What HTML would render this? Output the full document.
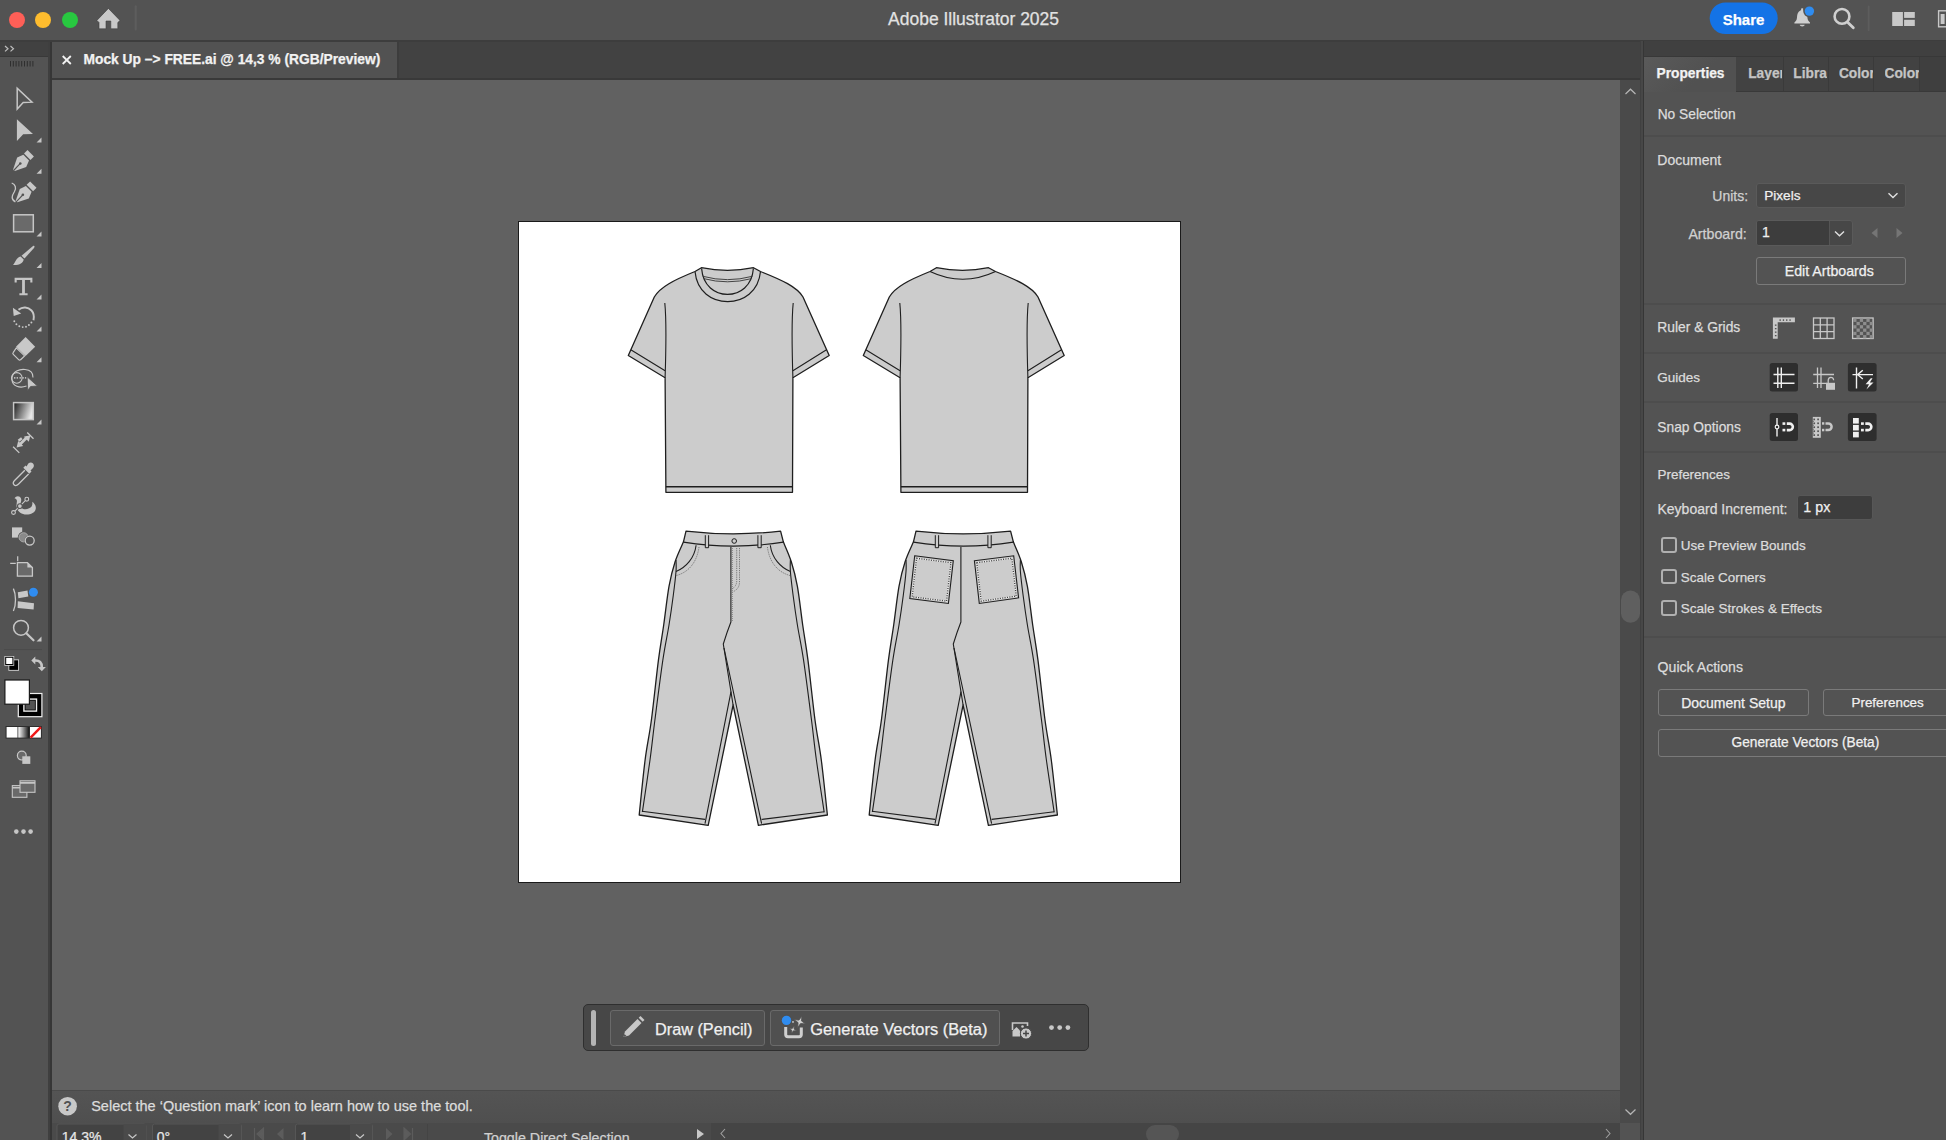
<!DOCTYPE html>
<html><head><meta charset="utf-8">
<style>
*{box-sizing:border-box;margin:0;padding:0}
html,body{width:1946px;height:1140px;overflow:hidden;background:#535353;font-family:"Liberation Sans",sans-serif;position:relative}
.a{position:absolute}
.t{position:absolute;white-space:nowrap;line-height:1;-webkit-text-stroke:0.25px currentColor}
.dv{position:absolute;left:1644px;width:302px;height:2px;background:#4d4d4d}
.btn{position:absolute;border:1.2px solid #7a7a7a;border-radius:3px;background:#535353}
</style></head><body>
<!-- title bar -->
<div class="a" style="left:0;top:0;width:1946px;height:40px;background:#535353"></div>
<div class="a" style="left:0;top:40px;width:1946px;height:2px;background:#3d3d3d"></div>
<div class="a" style="left:9px;top:11.5px;width:16px;height:16px;border-radius:50%;background:#fe5f57"></div>
<div class="a" style="left:35px;top:11.5px;width:16px;height:16px;border-radius:50%;background:#febc2e"></div>
<div class="a" style="left:61.5px;top:11.5px;width:16px;height:16px;border-radius:50%;background:#28c840"></div>
<svg class="a" style="left:0;top:0" width="1946" height="40" viewBox="0 0 1946 40">
<path d="M108.4,8.4 L120,20.4 L117.8,22.5 V28.8 H110.8 V21 H106 V28.8 H99 V22.5 L96.9,20.4 Z" fill="#c8c8c8" stroke="#3e3e3e" stroke-width="0.6"/>
<rect x="134.7" y="5.3" width="2" height="25.3" rx="1" fill="#5d5d5d"/>
<rect x="1709.7" y="2.5" width="68" height="31.5" rx="15.75" fill="#1473e6"/>
<!-- bell -->
<path d="M1802.2,10 C1798,10.5 1797.2,14 1797,17.5 C1796.8,20 1795.8,21.3 1794.4,22.5 V23.6 H1810 V22.5 C1808.6,21.3 1807.6,20 1807.4,17.5 C1807.2,14 1806.4,10.5 1802.2,10 Z" fill="#cfcfcf"/>
<rect x="1801.1" y="8.2" width="2.2" height="3" rx="0.8" fill="#cfcfcf"/>
<path d="M1799.7,24.8 H1804.7 C1804.5,27 1800,27 1799.7,24.8 Z" fill="#c8c8c8"/>
<circle cx="1809.4" cy="11.1" r="6.2" fill="#535353"/>
<circle cx="1809.4" cy="11.1" r="4.7" fill="#2f8cf0"/>
<!-- search -->
<circle cx="1842" cy="16.4" r="7.4" fill="none" stroke="#cfcfcf" stroke-width="2.6"/>
<path d="M1847.6,22.2 L1853.3,27.8" stroke="#cfcfcf" stroke-width="2.8" stroke-linecap="round"/>
<rect x="1867.8" y="5.5" width="1.8" height="25.6" rx="0.9" fill="#5d5d5d"/>
<!-- layout -->
<rect x="1892.2" y="12" width="10.7" height="14" fill="#c8c8c8"/>
<rect x="1904.1" y="12" width="10.7" height="5.9" fill="#c8c8c8"/>
<rect x="1904.1" y="19.8" width="10.7" height="6.2" fill="#c8c8c8"/>
<rect x="1938.6" y="10.8" width="9" height="16" fill="none" stroke="#c8c8c8" stroke-width="1.4"/>
<rect x="1940.6" y="14" width="4" height="10" fill="#c8c8c8"/>
</svg>

<!-- left toolbar -->
<div class="a" style="left:0;top:42px;width:48px;height:1098px;background:#535353"></div>
<div class="a" style="left:0;top:42px;width:48px;height:14px;background:#414141"></div>
<div class="a" style="left:0;top:56px;width:48px;height:1px;background:#393939"></div>
<div class="a" style="left:48px;top:42px;width:4px;height:1098px;background:#3f3f3f"></div>
<div class="a" style="left:50px;top:42px;width:1.5px;height:1098px;background:#363636"></div>
<!-- toolbar icons -->
<svg class="a" style="left:0;top:0" width="52" height="1140" viewBox="0 0 52 1140">
<g fill="none" stroke="#bdbdbd" stroke-width="1.2"><path d="M5,46 L8,48.7 L5,51.4 M10.5,46 L13.5,48.7 L10.5,51.4"/></g>
<g stroke="#2e2e2e" stroke-width="1"><path d="M10.5,61 V66.5 M13.3,61 V66.5 M16.1,61 V66.5 M18.9,61 V66.5 M21.7,61 V66.5 M24.5,61 V66.5 M27.3,61 V66.5 M30.1,61 V66.5 M32.9,61 V66.5"/></g>
<g fill="#c6c6c6">
<path d="M41.5,137.5 L41.5,142.5 L36.5,142.5Z M41.5,168.8 L41.5,173.8 L36.5,173.8Z M41.5,231.5 L41.5,236.5 L36.5,236.5Z M41.5,263 L41.5,268 L36.5,268Z M41.5,294.5 L41.5,299.5 L36.5,299.5Z M41.5,326.5 L41.5,331.5 L36.5,331.5Z M41.5,357.2 L41.5,362.2 L36.5,362.2Z M41.5,419.5 L41.5,424.5 L36.5,424.5Z M41.5,636.5 L41.5,641.5 L36.5,641.5Z"/>
</g>
<!-- selection -->
<path d="M17.2,88.2 L17.2,109 L23.2,102.6 L32,102.2 Z" fill="none" stroke="#c6c6c6" stroke-width="1.5" stroke-linejoin="miter"/>
<!-- direct selection -->
<path d="M16.9,119.3 L16.9,141.1 L23.2,134.3 L33,134.1 Z" fill="#c6c6c6"/>
<!-- pen -->
<path d="M13,169.7 L17.2,157.6 L23.3,154.7 L29,160.4 L26.2,167.1 L14.8,171 Z" fill="#c8c8c8"/>
<path d="M24,153.4 L27.5,150.1 L33.9,156.5 L30.5,160 Z" fill="#c8c8c8"/>
<path d="M13.6,170.5 L20.1,163.7" stroke="#535353" stroke-width="1.1"/>
<circle cx="20.3" cy="163.5" r="1.3" fill="#535353"/>
<!-- curvature pen -->
<path d="M15.6,201 L19.8,188.9 L25.9,186 L31.6,191.7 L28.8,198.4 L17.4,202.3 Z" fill="#c8c8c8"/>
<path d="M26.6,184.7 L30.1,181.4 L36.5,187.8 L33.1,191.3 Z" fill="#c8c8c8"/>
<path d="M16.2,201.8 L22.7,195" stroke="#535353" stroke-width="1.1"/>
<circle cx="22.9" cy="194.8" r="1.3" fill="#535353"/>
<path d="M11.7,183 C15.5,184.5 16.5,188 14.5,191.5 C12,195.5 10.5,199.5 15.4,201.8" fill="none" stroke="#c8c8c8" stroke-width="1.3"/>
<!-- rectangle -->
<rect x="13.6" y="214.8" width="19.7" height="17" fill="#6a6a6a" stroke="#c6c6c6" stroke-width="1.5"/>
<!-- paintbrush -->
<g fill="#c6c6c6">
<path d="M33,246 C34.5,245 35,246.5 34,248 L24.5,258.5 L21.5,255.8 Z"/>
<path d="M20.6,256.6 L23.7,259.4 C23,262.8 20,265.2 13,265 C15.5,263 16,257.5 20.6,256.6 Z"/>
</g>
<!-- type -->
<path d="M14.6,277.8 H32.4 V282.6 H30.3 V280 H24.9 V293.2 H27.6 V295.2 H19.4 V293.2 H22.1 V280 H16.7 V282.6 H14.6 Z" fill="#c6c6c6"/>
<!-- rotate -->
<path d="M18.5,309.8 C22.5,306.5 28,306.8 31.5,310.5 C33.8,313 34.2,317 33.5,320.3" fill="none" stroke="#c8c8c8" stroke-width="1.9"/>
<path d="M12.9,307.8 L13.7,316 L21.2,313.5 Z" fill="#c8c8c8"/>
<g fill="#c8c8c8"><circle cx="14.3" cy="321.3" r="0.95"/><circle cx="16.4" cy="324.2" r="0.95"/><circle cx="19.3" cy="326.3" r="0.95"/><circle cx="22.7" cy="327.1" r="0.95"/><circle cx="26" cy="326.8" r="0.95"/><circle cx="28.9" cy="325" r="0.95"/><circle cx="31.4" cy="322.5" r="0.95"/></g>
<!-- eraser -->
<path d="M25.6,337.1 L35.2,346.7 L25.6,356.1 L16,346.7 Z" fill="#c8c8c8"/>
<path d="M16.3,347.9 L24.6,355.9 L20.6,359.7 C20,360.3 19.2,360.3 18.6,359.7 L13.3,354.4 C12.7,353.8 12.7,353 13.3,352.4 Z" fill="none" stroke="#c8c8c8" stroke-width="1.2"/>
<!-- shape builder -->
<g fill="none" stroke="#c8c8c8" stroke-width="1.1">
<circle cx="16.8" cy="377.9" r="5.3"/>
<path d="M26.5,386 C20,388.5 12,386.5 12,379 C12,371 20,369 25,369.5 C30,370 33.2,373 33,377.5"/>
</g>
<g fill="#c8c8c8"><circle cx="14.75" cy="377.9" r="0.8"/><circle cx="17.3" cy="377.9" r="0.8"/><circle cx="20.2" cy="377.9" r="0.8"/><circle cx="23.1" cy="377.9" r="0.8"/><circle cx="25.6" cy="377.9" r="0.8"/></g>
<path d="M27.2,376.8 L27.7,390.6 L30.6,386.5 L37.4,386 Z" fill="#c8c8c8" stroke="#535353" stroke-width="0.8"/>
<!-- gradient -->
<defs><linearGradient id="gr" x1="0" x2="1" y1="0" y2="0.3"><stop offset="0" stop-color="#1a1a1a"/><stop offset="1" stop-color="#e6e6e6"/></linearGradient></defs>
<rect x="13.6" y="402.6" width="19.7" height="17" fill="url(#gr)" stroke="#c6c6c6" stroke-width="1.5"/>
<!-- width tool -->
<g stroke="#c8c8c8" stroke-width="1.3" fill="none"><path d="M13.1,446.7 L19.3,452.9 M27.25,432.5 L33.5,438.7"/></g>
<path d="M19.8,444.5 L27.3,437" stroke="#c8c8c8" stroke-width="2.8"/>
<path d="M16.6,447.6 L18.2,441 L23.2,446 Z M30.4,435.2 L28.8,441.8 L23.8,436.8 Z" fill="#c8c8c8"/>
<path d="M18.5,440.8 L21.8,438.2" stroke="#c8c8c8" stroke-width="2.4"/>
<!-- eyedropper -->
<path d="M28.3,463.5 C30.3,461.6 33.4,462.3 33.8,465 C34.1,466.5 33.4,467.6 32.5,468.5 L30.5,470.5 L31.5,471.5 L29.3,473.7 L23.3,467.7 L25.5,465.5 L26.5,466.5 Z" fill="#c8c8c8"/>
<path d="M24.8,470.3 L14.8,480.3 C13,482.1 13,483.8 14,484.8 C15,485.8 16.8,485.8 18.6,484 L28.6,474" fill="none" stroke="#c8c8c8" stroke-width="1.3"/>
<!-- puppet warp -->
<path d="M14.5,498.3 C16,495.5 20,495.5 21,498.5 C22,501.5 19.5,503.5 21,507 C22.5,510 27,510 30.5,507.5 C32.5,506 32.5,503.5 32.3,501.8 C34,503 36.2,505.5 35.8,508.5 C35.3,512.5 31,514.5 26.5,514.5 C21,514.5 16.8,511 16.5,506 C16.3,502.5 18.5,499.5 14.5,498.3 Z" fill="#c8c8c8"/>
<path d="M13.5,512.5 L26.8,499.2" stroke="#535353" stroke-width="2.6"/>
<path d="M13.5,512.5 L26.8,499.2" stroke="#c8c8c8" stroke-width="1.1"/>
<circle cx="13.5" cy="512.5" r="1.9" fill="#535353" stroke="#c8c8c8" stroke-width="1.1"/>
<circle cx="26.8" cy="499.2" r="1.9" fill="#535353" stroke="#c8c8c8" stroke-width="1.1"/>
<circle cx="19.9" cy="506.1" r="2.4" fill="#c8c8c8" stroke="#535353" stroke-width="1.1"/>
<!-- shaper / blend -->
<rect x="12" y="527.4" width="10.2" height="10.2" fill="#c8c8c8"/>
<circle cx="23.6" cy="537.3" r="5.2" fill="#8a8a8a" stroke="#535353" stroke-width="1.3"/>
<circle cx="23.6" cy="537.3" r="4.6" fill="none" stroke="#b8b8b8" stroke-width="0.8"/>
<circle cx="29.7" cy="540.6" r="5.3" fill="#535353"/>
<circle cx="29.7" cy="540.6" r="4.5" fill="#535353" stroke="#c8c8c8" stroke-width="1.3"/>
<!-- artboard -->
<path d="M17.4,562.6 H27.4 L32.4,567.6 V576.2 H17.4 Z" fill="#6a6a6a" stroke="#c8c8c8" stroke-width="1.3"/>
<path d="M27.4,562.6 L32.4,567.6 H27.4 Z" fill="#c8c8c8"/>
<path d="M17.7,556.2 V561.2 M10.2,563.3 H15.8" stroke="#c8c8c8" stroke-width="1.2"/>
<!-- generative / chart -->
<path d="M13.4,588.6 C16.2,594.5 16.2,605 13.4,611" fill="none" stroke="#c8c8c8" stroke-width="1.3"/>
<path d="M17.8,592.2 L27.5,590.4 L28.3,596.5 L18.4,598.2 Z M17.8,601.3 L34,603.2 L33.6,609.6 L17.6,608 Z" fill="#c8c8c8"/>
<circle cx="33.4" cy="592.3" r="5.2" fill="#535353"/>
<circle cx="33.4" cy="592.3" r="4.5" fill="#2f8cf0"/>
<!-- zoom -->
<circle cx="21" cy="627.8" r="7.4" fill="none" stroke="#c6c6c6" stroke-width="1.5"/>
<path d="M26.3,633.2 L33.5,640.3" stroke="#c6c6c6" stroke-width="2.2" stroke-linecap="round"/>
<path d="M4,649.6 H42" stroke="#4a4a4a" stroke-width="1"/>
<!-- swap/default -->
<rect x="8.4" y="659.4" width="10.6" height="11.4" fill="#cfcfcf"/>
<rect x="9.3" y="660.3" width="8.8" height="9.6" fill="#000"/>
<rect x="4.4" y="656" width="9.8" height="9.8" fill="#cfcfcf"/>
<rect x="5.2" y="656.8" width="8.2" height="8.2" fill="#000"/>
<rect x="6.2" y="657.8" width="6.2" height="6.2" fill="#fff"/>
<path d="M34.5,660.6 C39.5,660.2 42,662.5 41.8,667.5" fill="none" stroke="#c6c6c6" stroke-width="2.6"/>
<path d="M31.3,660.4 L35.3,656.6 L35.3,664.4 Z M37.8,667 L45.9,667 L41.8,671.3 Z" fill="#c6c6c6"/>
<!-- stroke -->
<rect x="18.3" y="693.5" width="23.6" height="23.2" fill="#000" stroke="#eeeeee" stroke-width="1.2"/>
<rect x="23.9" y="699.1" width="12.6" height="12" fill="none" stroke="#eeeeee" stroke-width="1.4"/>
<rect x="25.5" y="700.6" width="9.4" height="9" fill="#535353"/>
<!-- fill -->
<rect x="4.9" y="680" width="24.5" height="24.2" fill="#fff" stroke="#1a1a1a" stroke-width="1.2"/>
<!-- color mode -->
<rect x="5.5" y="726" width="36.4" height="12.6" fill="#2e2e2e"/>
<rect x="6.6" y="727" width="10.9" height="10.6" fill="#fff"/>
<defs><linearGradient id="g2" x1="0" x2="1"><stop offset="0" stop-color="#fff"/><stop offset="1" stop-color="#111"/></linearGradient></defs>
<rect x="18.3" y="727" width="10.9" height="10.6" fill="url(#g2)"/>
<rect x="30" y="727" width="10.9" height="10.6" fill="#fff"/>
<path d="M30.6,737.6 L40.8,727.2" stroke="#f01818" stroke-width="2.4"/>
<!-- draw mode -->
<circle cx="21.8" cy="755.6" r="4.4" fill="#6a6a6a" stroke="#c6c6c6" stroke-width="1.2"/>
<rect x="22.3" y="756.3" width="8" height="7.6" fill="#c6c6c6"/>
<!-- screen mode -->
<g>
<rect x="12.3" y="785.6" width="14.6" height="11.7" fill="#6a6a6a" stroke="#c6c6c6" stroke-width="1.1"/>
<rect x="20" y="780.8" width="15" height="11.5" fill="#6a6a6a" stroke="#c6c6c6" stroke-width="1.1"/>
<path d="M20,782.9 H35 M12.3,787.8 H20" stroke="#c6c6c6" stroke-width="1.6"/>
</g>
<!-- more -->
<g fill="#c6c6c6"><circle cx="16.3" cy="831.6" r="2.3"/><circle cx="23.5" cy="831.6" r="2.3"/><circle cx="30.6" cy="831.6" r="2.3"/></g>
</svg>

<!-- tab bar -->
<div class="a" style="left:52px;top:42px;width:1588px;height:36px;background:#424242"></div>
<div class="a" style="left:52px;top:78px;width:1588px;height:2px;background:#393939"></div>
<div class="a" style="left:52px;top:42px;width:345px;height:36px;background:#525252"></div>
<div class="a" style="left:397px;top:42px;width:1.5px;height:36px;background:#3d3d3d"></div>
<svg class="a" style="left:60px;top:53px" width="14" height="14" viewBox="0 0 14 14"><path d="M2.7,3 L10.8,11 M10.8,3 L2.7,11" stroke="#f2f2f2" stroke-width="1.8"/></svg>

<!-- canvas -->
<div class="a" style="left:52px;top:80px;width:1568px;height:1010px;background:#616161"></div>
<div class="a" style="left:1620px;top:80px;width:20px;height:1043px;background:#4a4a4a"></div>
<svg class="a" style="left:1620px;top:80px" width="20" height="1043" viewBox="0 0 20 1043">
<path d="M5.5,14 L10.5,9.2 L15.5,14" fill="none" stroke="#b5b5b5" stroke-width="1.2"/>
<rect x="1" y="510.5" width="19" height="32.2" rx="9.5" fill="#5f5f5f"/>
<path d="M5.5,1029.5 L10.5,1034.3 L15.5,1029.5" fill="none" stroke="#b5b5b5" stroke-width="1.2"/>
</svg>

<!-- artboard -->
<div class="a" style="left:518px;top:221px;width:663px;height:662px;background:#fff;border:1px solid #1a1a1a"></div>
<svg class="a" style="left:0;top:0" width="1946" height="1140" viewBox="0 0 1946 1140"><path d="M701.4,267.7 Q727.5,273 753.5,267.7 L760.5,271.5 C782,280 797,287 803,297 L829.2,355.5 L792.9,377.7 L792.5,492.3 L665.9,492.3 L665.1,377.7 L628.3,355.5 L654.3,297 C660,287 674,280 695,271.5 Z" fill="#cccccc" stroke="#1e1e1e" stroke-width="1.3" stroke-linejoin="round"/><path d="M695,271.5 C697,292 712,301.6 727.7,301.6 C743,301.6 758.5,292 760.5,271.5" fill="none" stroke="#1e1e1e" stroke-width="1.2"/><path d="M701.6,268.5 C703,286 715,294.4 727.5,294.4 C740,294.4 752,286 753.4,268.5" fill="none" stroke="#1e1e1e" stroke-width="1.2"/><path d="M702.8,276.3 Q727.5,283 752.4,276.3" fill="none" stroke="#333" stroke-width="0.9"/><path d="M703.6,278.6 Q727.5,285 751.6,278.6" fill="none" stroke="#333" stroke-width="0.9"/><path d="M630.8,349.7 L665.1,370.7 M826.5,349.7 L792.9,370.7" fill="none" stroke="#1e1e1e" stroke-width="1.1"/><path d="M664.8,303 C666.5,320 666,350 665.1,377.7 M793.2,303 C791.5,320 792,350 792.9,377.7" fill="none" stroke="#1e1e1e" stroke-width="1.1"/><path d="M665.9,486.7 L792.5,486.7" fill="none" stroke="#1e1e1e" stroke-width="1.4"/><g transform="translate(235,0)"><path d="M701.4,267.7 Q727.5,273 753.5,267.7 L760.5,271.5 C782,280 797,287 803,297 L829.2,355.5 L792.9,377.7 L792.5,492.3 L665.9,492.3 L665.1,377.7 L628.3,355.5 L654.3,297 C660,287 674,280 695,271.5 Z" fill="#cccccc" stroke="#1e1e1e" stroke-width="1.3" stroke-linejoin="round"/><path d="M695,271.5 Q727.7,287 760.5,271.5" fill="none" stroke="#1e1e1e" stroke-width="1.2"/><path d="M630.8,349.7 L665.1,370.7 M826.5,349.7 L792.9,370.7" fill="none" stroke="#1e1e1e" stroke-width="1.1"/><path d="M664.8,303 C666.5,320 666,350 665.1,377.7 M793.2,303 C791.5,320 792,350 792.9,377.7" fill="none" stroke="#1e1e1e" stroke-width="1.1"/><path d="M665.9,486.7 L792.5,486.7" fill="none" stroke="#1e1e1e" stroke-width="1.4"/></g><path d="M686,531.1 Q733,536.5 780.6,531.1 L783.4,542.1 C784.72,545.38 788.97,554.42 791.30,561.80 C793.63,569.18 795.50,575.87 797.40,586.40 C799.30,596.93 800.93,612.67 802.70,625.00 C804.47,637.33 805.95,644.57 808.00,660.40 C810.05,676.23 812.78,703.40 815.00,720.00 C817.22,736.60 819.23,744.17 821.30,760.00 C823.37,775.83 826.38,805.83 827.40,815.00 L758.4,825.3 L733.1,705 L708.2,825.3 L639.2,815 C640.18,805.83 643.07,775.83 645.10,760.00 C647.13,744.17 649.18,736.60 651.40,720.00 C653.62,703.40 656.35,676.23 658.40,660.40 C660.45,644.57 661.93,637.33 663.70,625.00 C665.47,612.67 667.10,596.93 669.00,586.40 C670.90,575.87 672.70,569.18 675.10,561.80 C677.50,554.42 682.02,545.38 683.40,542.10 L686,531.1 Z" fill="#cccccc" stroke="#1e1e1e" stroke-width="1.3" stroke-linejoin="round"/><path d="M683.4,542.1 Q733.5,550 783.4,542.1" fill="none" stroke="#1e1e1e" stroke-width="1.2"/><path d="M705.3,535.2 L705.3,547.7 L708.6,547.7 L708.6,535.2 M757.9,535.2 L757.9,547.7 L761.2,547.7 L761.2,535.2" fill="#cccccc" stroke="#1e1e1e" stroke-width="1"/><path d="M676,560 C676.00,561.92 676.45,565.63 676.00,571.50 C675.55,577.37 674.47,586.28 673.30,595.20 C672.13,604.12 670.75,614.13 669.00,625.00 C667.25,635.87 665.15,644.57 662.80,660.40 C660.45,676.23 657.03,703.40 654.90,720.00 C652.77,736.60 652.08,744.70 650.00,760.00 C647.92,775.30 643.67,803.17 642.40,811.80 " fill="none" stroke="#1e1e1e" stroke-width="1.1"/><path d="M790.4,560 C790.40,561.92 789.95,565.63 790.40,571.50 C790.85,577.37 791.93,586.28 793.10,595.20 C794.27,604.12 795.65,614.13 797.40,625.00 C799.15,635.87 801.25,644.57 803.60,660.40 C805.95,676.23 809.37,703.40 811.50,720.00 C813.63,736.60 814.28,744.62 816.40,760.00 C818.52,775.38 822.90,803.58 824.20,812.30 " fill="none" stroke="#1e1e1e" stroke-width="1.1"/><path d="M641.9,811.3 L705,819.4 M761.6,819.4 L824.2,811.8" fill="none" stroke="#1e1e1e" stroke-width="1.1"/><path d="M705,823.7 L731,691.6 M724,648 L761.6,823.7" fill="none" stroke="#1e1e1e" stroke-width="1.1"/><path d="M730.9,547 L730.9,622 Q727,632 723.3,644 L733.1,705" fill="none" stroke="#1e1e1e" stroke-width="1.1"/><circle cx="734.2" cy="541" r="2.3" fill="#cccccc" stroke="#1e1e1e" stroke-width="1"/><path d="M696.1,545.2 C694.5,558 686,567.5 676,571.5 M770.3,545.2 C771.9,558 780.4,567.5 790.4,571.5" fill="none" stroke="#1e1e1e" stroke-width="1.1"/><path d="M699,547 C697,562 689,572 676.5,575.5 M767.4,547 C769.4,562 777.4,572 789.9,575.5" fill="none" stroke="#555" stroke-width="0.7" stroke-dasharray="1.2,1"/><path d="M736.7,548 L736.7,581 Q736.7,586 732,589 M739.5,548 L739.5,582 Q739.5,589 732.5,592" fill="none" stroke="#555" stroke-width="0.7" stroke-dasharray="1.2,1"/><path d="M732.5,548 L732.5,622" fill="none" stroke="#666" stroke-width="0.6" stroke-dasharray="1,1"/><g transform="translate(230,0)"><path d="M686,531.1 Q733,536.5 780.6,531.1 L783.4,542.1 C784.72,545.38 788.97,554.42 791.30,561.80 C793.63,569.18 795.50,575.87 797.40,586.40 C799.30,596.93 800.93,612.67 802.70,625.00 C804.47,637.33 805.95,644.57 808.00,660.40 C810.05,676.23 812.78,703.40 815.00,720.00 C817.22,736.60 819.23,744.17 821.30,760.00 C823.37,775.83 826.38,805.83 827.40,815.00 L758.4,825.3 L733.1,705 L708.2,825.3 L639.2,815 C640.18,805.83 643.07,775.83 645.10,760.00 C647.13,744.17 649.18,736.60 651.40,720.00 C653.62,703.40 656.35,676.23 658.40,660.40 C660.45,644.57 661.93,637.33 663.70,625.00 C665.47,612.67 667.10,596.93 669.00,586.40 C670.90,575.87 672.70,569.18 675.10,561.80 C677.50,554.42 682.02,545.38 683.40,542.10 L686,531.1 Z" fill="#cccccc" stroke="#1e1e1e" stroke-width="1.3" stroke-linejoin="round"/><path d="M683.4,542.1 Q733.5,550 783.4,542.1" fill="none" stroke="#1e1e1e" stroke-width="1.2"/><path d="M705.3,535.2 L705.3,547.7 L708.6,547.7 L708.6,535.2 M757.9,535.2 L757.9,547.7 L761.2,547.7 L761.2,535.2" fill="#cccccc" stroke="#1e1e1e" stroke-width="1"/><path d="M676,560 C676.00,561.92 676.45,565.63 676.00,571.50 C675.55,577.37 674.47,586.28 673.30,595.20 C672.13,604.12 670.75,614.13 669.00,625.00 C667.25,635.87 665.15,644.57 662.80,660.40 C660.45,676.23 657.03,703.40 654.90,720.00 C652.77,736.60 652.08,744.70 650.00,760.00 C647.92,775.30 643.67,803.17 642.40,811.80 " fill="none" stroke="#1e1e1e" stroke-width="1.1"/><path d="M790.4,560 C790.40,561.92 789.95,565.63 790.40,571.50 C790.85,577.37 791.93,586.28 793.10,595.20 C794.27,604.12 795.65,614.13 797.40,625.00 C799.15,635.87 801.25,644.57 803.60,660.40 C805.95,676.23 809.37,703.40 811.50,720.00 C813.63,736.60 814.28,744.62 816.40,760.00 C818.52,775.38 822.90,803.58 824.20,812.30 " fill="none" stroke="#1e1e1e" stroke-width="1.1"/><path d="M641.9,811.3 L705,819.4 M761.6,819.4 L824.2,811.8" fill="none" stroke="#1e1e1e" stroke-width="1.1"/><path d="M705,823.7 L731,691.6 M724,648 L761.6,823.7" fill="none" stroke="#1e1e1e" stroke-width="1.1"/><path d="M730.9,547 L730.9,622 Q727,632 723.3,644 L733.1,705" fill="none" stroke="#1e1e1e" stroke-width="1.1"/><path d="M684.7,555.8 L723.3,560.7 L718.4,603.5 L679.8,598.6 Z M744.4,560.7 L783.7,555.8 L788.6,597.9 L749.3,603.5 Z" fill="#cccccc" stroke="#1e1e1e" stroke-width="1.1"/><path d="M686.6,558.3 L720.9,562.7 L716.5,601.1 L682.2,596.8 Z M746.8,562.7 L781.8,558.3 L786.2,596.1 L751.2,601.1 Z" fill="none" stroke="#ececec" stroke-width="1.3"/><path d="M686.6,558.3 L720.9,562.7 L716.5,601.1 L682.2,596.8 Z M746.8,562.7 L781.8,558.3 L786.2,596.1 L751.2,601.1 Z" fill="none" stroke="#444" stroke-width="1.3" stroke-dasharray="1.1,1.3"/></g></svg>

<!-- floating contextual bar -->
<div class="a" style="left:583px;top:1004px;width:506px;height:47px;background:#474747;border:1.5px solid #2f2f2f;border-radius:5px"></div>
<div class="a" style="left:591.2px;top:1010px;width:5px;height:35.5px;background:#b4b4b4;border-radius:2.5px"></div>
<div class="a" style="left:609.5px;top:1009.5px;width:155.5px;height:36.5px;border:1.3px solid #6a6a6a;border-radius:3px;background:#505050"></div>
<div class="a" style="left:770.2px;top:1009.5px;width:229.5px;height:36.5px;border:1.3px solid #6a6a6a;border-radius:3px;background:#505050"></div>
<svg class="a" style="left:580px;top:1000px" width="510" height="55" viewBox="580 1000 510 55">
<!-- pencil -->
<path d="M623.5,1037 L625,1031.5 L637.5,1019 L641.5,1023 L629,1035.5 Z" fill="#c8c8c8"/>
<path d="M638.7,1017.8 L640.5,1016 L644.5,1020 L642.7,1021.8 Z" fill="#c8c8c8"/>
<path d="M623.5,1037 L626.5,1036 L624.5,1034 Z" fill="#505050"/>
<!-- generate vectors icon -->
<path d="M785.7,1027 V1034.5 C785.7,1036 786.5,1036.7 788,1036.7 H799 C800.5,1036.7 801.3,1036 801.3,1034.5 V1027.5" fill="none" stroke="#cfcfcf" stroke-width="3"/>
<path d="M801.85,1016.16 L801.52,1021.00 L805.44,1023.85 L800.60,1023.52 L797.75,1027.44 L798.08,1022.60 L794.16,1019.75 L799.00,1020.08 Z" fill="#cfcfcf" stroke="#505050" stroke-width="0.8"/>
<path d="M794.20,1026.03 L794.08,1029.05 L796.47,1030.90 L793.45,1030.78 L791.60,1033.17 L791.72,1030.15 L789.33,1028.30 L792.35,1028.42 Z" fill="#cfcfcf" stroke="#505050" stroke-width="0.8"/>
<circle cx="793" cy="1021.9" r="0.9" fill="#cfcfcf"/>
<circle cx="786.5" cy="1020.4" r="5.6" fill="#505050"/>
<circle cx="786.5" cy="1020.4" r="4.7" fill="#2f8cf0"/>
<!-- image add icon -->
<path d="M1012.5,1030 V1023 H1027.5 V1026" fill="none" stroke="#c8c8c8" stroke-width="1.6"/>
<path d="M1012.5,1036.5 V1031 L1016.5,1027 L1020,1030.5 V1036.5 Z" fill="#c8c8c8"/>
<circle cx="1022.5" cy="1026.5" r="1.3" fill="#c8c8c8"/>
<circle cx="1026" cy="1033.5" r="5.6" fill="#c8c8c8" stroke="#474747" stroke-width="1"/>
<path d="M1026,1030.5 V1036.5 M1023,1033.5 H1029" stroke="#474747" stroke-width="1.5"/>
<!-- more -->
<circle cx="1051.5" cy="1027.6" r="2.4" fill="#c8c8c8"/><circle cx="1059.7" cy="1027.6" r="2.4" fill="#c8c8c8"/><circle cx="1067.9" cy="1027.6" r="2.4" fill="#c8c8c8"/>
</svg>

<!-- status bar -->
<div class="a" style="left:52px;top:1090px;width:1568px;height:1px;background:#4a4a4a"></div>
<div class="a" style="left:52px;top:1091px;width:1568px;height:32px;background:linear-gradient(#545454,#4f4f4f)"></div>
<div class="a" style="left:52px;top:1123px;width:1568px;height:17px;background:#4a4a4a"></div>
<svg class="a" style="left:0;top:1080px" width="1646" height="60" viewBox="0 1080 1646 60">
<circle cx="67.6" cy="1106.2" r="9.3" fill="#c8c8c8"/>
<text x="67.6" y="1111.3" text-anchor="middle" font-family="Liberation Sans" font-weight="bold" font-size="14" fill="#525252">?</text>
<!-- zoom field -->
<rect x="57" y="1124" width="89" height="20" rx="2" fill="#434343" stroke="#565656" stroke-width="1"/>
<rect x="123.5" y="1124" width="22.5" height="20" fill="#4a4a4a"/>
<path d="M128.5,1134.5 L132.5,1138 L136.5,1134.5" fill="none" stroke="#c8c8c8" stroke-width="1.2"/>
<rect x="152.5" y="1124" width="89" height="20" rx="2" fill="#434343" stroke="#565656" stroke-width="1"/>
<rect x="218.5" y="1124" width="22.5" height="20" fill="#4a4a4a"/>
<path d="M224,1134.5 L228,1138 L232,1134.5" fill="none" stroke="#c8c8c8" stroke-width="1.2"/>
<path d="M254.5,1128 V1140 M257,1134 L263.5,1128 V1140 Z" fill="#5c5c5c" stroke="#5c5c5c" stroke-width="1.2"/>
<path d="M283.5,1128 L277,1134 L283.5,1140 Z" fill="#5c5c5c"/>
<rect x="295.5" y="1124" width="77" height="20" rx="2" fill="#434343" stroke="#565656" stroke-width="1"/>
<rect x="350" y="1124" width="22" height="20" fill="#4a4a4a"/>
<path d="M356,1134.5 L360,1138 L364,1134.5" fill="none" stroke="#c8c8c8" stroke-width="1.2"/>
<path d="M386,1128 L392.5,1134 L386,1140 Z" fill="#5c5c5c"/>
<path d="M404,1128 L410.5,1134 L404,1140 Z M412.5,1128 V1140" fill="#5c5c5c" stroke="#5c5c5c" stroke-width="1.2"/>
<rect x="427" y="1124" width="1" height="16" fill="#444"/>
<path d="M697,1129 L704,1134 L697,1139 Z" fill="#c8c8c8"/>
<rect x="711" y="1123" width="909" height="17" fill="#454545"/>
<path d="M725,1129 L721,1133.5 L725,1138" fill="none" stroke="#a0a0a0" stroke-width="1.1"/>
<rect x="1146" y="1125" width="33" height="18" rx="9" fill="#555555"/>
<path d="M1606,1129 L1610,1133.5 L1606,1138" fill="none" stroke="#a0a0a0" stroke-width="1.1"/>
</svg>

<!-- right panel -->
<div class="a" style="left:1640px;top:41px;width:1px;height:1099px;background:#404040"></div>
<div class="a" style="left:1641px;top:41px;width:2px;height:1099px;background:#474747"></div>
<div class="a" style="left:1643px;top:41px;width:1px;height:1099px;background:#363636"></div>
<div class="a" style="left:1644px;top:41px;width:302px;height:15px;background:#404040"></div>
<div class="a" style="left:1644px;top:56px;width:302px;height:1px;background:#383838"></div>
<div class="a" style="left:1644px;top:57px;width:302px;height:35px;background:#424242"></div>
<div class="a" style="left:1644px;top:57px;width:92px;height:35px;background:linear-gradient(135deg,#5a5a5a,#515151 60%)"></div>
<div class="a" style="left:1782.5px;top:57px;width:1px;height:35px;background:#3a3a3a"></div>
<div class="a" style="left:1827.5px;top:57px;width:1px;height:35px;background:#3a3a3a"></div>
<div class="a" style="left:1873px;top:57px;width:1px;height:35px;background:#3a3a3a"></div>
<div class="a" style="left:1919px;top:57px;width:1px;height:35px;background:#3a3a3a"></div>
<div class="a" style="left:1920px;top:57px;width:26px;height:35px;background:#3f3f3f"></div>
<div class="a" style="left:1644px;top:92px;width:302px;height:1048px;background:#535353"></div>
<div class="a" style="left:1736px;top:91px;width:210px;height:1px;background:#393939"></div>
<div class="t" style="left:0;top:0;width:1946px;height:92px;overflow:hidden">
<div class="t" style="left:1748.2px;top:66.7px;width:34px;overflow:hidden;font-size:13.75px;font-weight:bold;color:#c4c4c4">Layers</div>
<div class="t" style="left:1793.3px;top:66.7px;width:34px;overflow:hidden;font-size:13.75px;font-weight:bold;color:#c4c4c4">Libraries</div>
<div class="t" style="left:1838.9px;top:66.7px;width:34px;overflow:hidden;font-size:13.75px;font-weight:bold;color:#c4c4c4">Color</div>
<div class="t" style="left:1884.5px;top:66.7px;width:34.5px;overflow:hidden;font-size:13.75px;font-weight:bold;color:#c4c4c4">Color</div>
</div>

<div class="dv" style="top:135px"></div>
<div class="dv" style="top:302.5px"></div>
<div class="dv" style="top:352px"></div>
<div class="dv" style="top:401px"></div>
<div class="dv" style="top:450.5px"></div>
<div class="dv" style="top:636px"></div>

<!-- units dropdown -->
<div class="a" style="left:1755.6px;top:182.7px;width:150px;height:25.4px;background:#474747;border:1px solid #5a5a5a;border-radius:3px"></div>
<svg class="a" style="left:1880px;top:185px" width="24" height="20" viewBox="0 0 24 20"><path d="M8.5,8.3 L13,12.5 L17.5,8.3" fill="none" stroke="#e0e0e0" stroke-width="1.4"/></svg>
<!-- artboard field -->
<div class="a" style="left:1755.6px;top:220px;width:97px;height:26.4px;background:#474747;border:1px solid #5a5a5a;border-radius:3px"></div>
<div class="a" style="left:1756.6px;top:221px;width:72px;height:24.4px;background:#3d3d3d;border-radius:2px 0 0 2px"></div>
<div class="a" style="left:1828.6px;top:221px;width:1px;height:24.4px;background:#555"></div>
<svg class="a" style="left:1830px;top:223px" width="22" height="20" viewBox="0 0 22 20"><path d="M5,8.5 L9.5,12.7 L14,8.5" fill="none" stroke="#e0e0e0" stroke-width="1.4"/></svg>
<svg class="a" style="left:1865px;top:225px" width="45" height="16" viewBox="0 0 45 16"><path d="M12.5,3 L6.5,8 L12.5,13 Z M31.5,3 L37.5,8 L31.5,13 Z" fill="#757575"/></svg>
<div class="t" style="left:1761.9px;top:225.4px;font-size:14px;color:#f0f0f0">1</div>
<!-- edit artboards -->
<div class="btn" style="left:1755.6px;top:257.4px;width:150px;height:27.2px"></div>

<!-- ruler & grids icons -->
<svg class="a" style="left:1760px;top:310px" width="130" height="140" viewBox="1760 310 130 140">
<g fill="none" stroke="#c8c8c8" stroke-width="1.3">

<rect x="1813.5" y="318" width="20.5" height="20.5"/>
<path d="M1820.3,318 V338.5 M1827.1,318 V338.5 M1813.5,324.8 H1834 M1813.5,331.6 H1834"/>
<rect x="1852.6" y="318" width="20.5" height="20.5"/>
</g>
<path d="M1772.9,338.7 V317.5 H1794.9 V322.3 H1777.7 V338.7 Z" fill="#c8c8c8"/>
<g fill="#535353">
<rect x="1779.5" y="319.3" width="1.3" height="1.6"/><rect x="1782.8" y="319.3" width="1.3" height="1.6"/><rect x="1786.1" y="319.3" width="1.3" height="1.6"/><rect x="1789.4" y="319.3" width="1.3" height="1.6"/>
<rect x="1774.9" y="324.5" width="1.6" height="1.3"/><rect x="1774.9" y="328" width="1.6" height="1.3"/><rect x="1774.9" y="331.5" width="1.6" height="1.3"/><rect x="1774.9" y="335" width="1.6" height="1.3"/>
</g>
<g fill="#8e8e8e">
<rect x="1853.2" y="318.6" width="3.3" height="3.3"/><rect x="1859.8" y="318.6" width="3.3" height="3.3"/><rect x="1866.4" y="318.6" width="3.3" height="3.3"/>
<rect x="1856.5" y="321.9" width="3.3" height="3.3"/><rect x="1863.1" y="321.9" width="3.3" height="3.3"/><rect x="1869.7" y="321.9" width="3.3" height="3.3"/>
<rect x="1853.2" y="325.2" width="3.3" height="3.3"/><rect x="1859.8" y="325.2" width="3.3" height="3.3"/><rect x="1866.4" y="325.2" width="3.3" height="3.3"/>
<rect x="1856.5" y="328.5" width="3.3" height="3.3"/><rect x="1863.1" y="328.5" width="3.3" height="3.3"/><rect x="1869.7" y="328.5" width="3.3" height="3.3"/>
<rect x="1853.2" y="331.8" width="3.3" height="3.3"/><rect x="1859.8" y="331.8" width="3.3" height="3.3"/><rect x="1866.4" y="331.8" width="3.3" height="3.3"/>
<rect x="1856.5" y="335.1" width="3.3" height="3.3"/><rect x="1863.1" y="335.1" width="3.3" height="3.3"/><rect x="1869.7" y="335.1" width="3.3" height="3.3"/>
</g>
<!-- guides -->
<rect x="1769.7" y="363" width="28.3" height="28.4" rx="2.5" fill="#2e2e2e"/>
<rect x="1847.9" y="363" width="28.7" height="28.4" rx="2.5" fill="#2e2e2e"/>
<g stroke="#f0f0f0" stroke-width="1.4" fill="none">
<path d="M1777.8,367.5 V388 M1781.3,367.5 V388 M1773.5,374.5 H1794.5 M1773.5,383.3 H1794.5"/>
<path d="M1856.5,367.5 V388.5 M1852.5,374.6 H1873"/>
<path d="M1862.8,370.2 L1857.6,374.6 L1862.8,379"/>
</g>
<path d="M1870.8,378.3 L1865.6,384.2 H1869 L1866.4,389.5 L1873.5,382.6 H1869.8 L1872.5,378.3 Z" fill="#f0f0f0"/>
<g stroke="#c8c8c8" stroke-width="1.3" fill="none">
<path d="M1817.5,367.5 V388 M1821,367.5 V388 M1813.2,374.5 H1834 M1813.2,383.3 H1827"/>
<path d="M1828.2,383 V380.5 C1828.2,376.3 1833.6,376.3 1833.6,380.3"/>
</g>
<rect x="1826" y="382.8" width="9" height="7" fill="#c8c8c8"/>
<!-- snap -->
<rect x="1769.7" y="413" width="28.3" height="28" rx="2.5" fill="#2e2e2e"/>
<rect x="1847.9" y="413" width="28.7" height="28" rx="2.5" fill="#2e2e2e"/>
<g fill="none" stroke="#f0f0f0">
<path d="M1777,418 V436.5" stroke-width="1.4"/>
<circle cx="1777" cy="427" r="1.8" fill="#2e2e2e" stroke-width="1.2"/>
<path d="M1786.8,423.6 H1789.6 A3.25,3.25 0 0 1 1789.6,430.1 H1786.8" stroke-width="2.6"/>
<path d="M1865.3,423.6 H1868.1 A3.25,3.25 0 0 1 1868.1,430.1 H1865.3" stroke-width="2.6"/>
</g>
<g fill="#f0f0f0"><rect x="1782.5" y="422.3" width="2.8" height="2.6"/><rect x="1782.5" y="428.8" width="2.8" height="2.6"/><rect x="1861" y="422.3" width="2.8" height="2.6"/><rect x="1861" y="428.8" width="2.8" height="2.6"/>
<rect x="1853" y="418" width="5.8" height="5.6"/><rect x="1853" y="424.9" width="5.8" height="5.6"/><rect x="1853" y="431.8" width="5.8" height="5.6"/></g>
<rect x="1812.8" y="416.9" width="8" height="20.9" fill="#c8c8c8"/>
<g fill="#535353"><rect x="1813.35" y="418.55" width="1.7" height="1.7"/><rect x="1813.35" y="422.45" width="1.7" height="1.7"/><rect x="1813.35" y="426.35" width="1.7" height="1.7"/><rect x="1813.35" y="430.35" width="1.7" height="1.7"/><rect x="1813.35" y="434.25" width="1.7" height="1.7"/><rect x="1817.25" y="418.55" width="1.7" height="1.7"/><rect x="1817.25" y="422.45" width="1.7" height="1.7"/><rect x="1817.25" y="426.35" width="1.7" height="1.7"/><rect x="1817.25" y="430.35" width="1.7" height="1.7"/><rect x="1817.25" y="434.25" width="1.7" height="1.7"/></g>
<path d="M1812.8,421.3 h1 M1812.8,425.2 h1 M1812.8,429.2 h1 M1812.8,433.1 h1" stroke="#535353" stroke-width="1"/>
<path d="M1825.5,423.5 H1828.3 A3.3,3.3 0 0 1 1828.3,430.1 H1825.5" fill="none" stroke="#c8c8c8" stroke-width="2.5"/>
<rect x="1822" y="422.2" width="2.3" height="2.5" fill="#c8c8c8"/><rect x="1822" y="428.8" width="2.3" height="2.5" fill="#c8c8c8"/>
</svg>

<!-- keyboard increment -->
<div class="a" style="left:1796.7px;top:494.7px;width:76.6px;height:25.6px;background:#3d3d3d;border:1px solid #575757;border-radius:3px"></div>
<div class="t" style="left:1803.3px;top:499.5px;font-size:14.28px;color:#f0f0f0">1 px</div>
<!-- checkboxes -->
<div class="a" style="left:1660.8px;top:537px;width:16.2px;height:15.5px;border:2px solid #b0b0b0;border-radius:3px"></div>
<div class="a" style="left:1660.8px;top:568.7px;width:16.2px;height:15.5px;border:2px solid #b0b0b0;border-radius:3px"></div>
<div class="a" style="left:1660.8px;top:600px;width:16.2px;height:15.5px;border:2px solid #b0b0b0;border-radius:3px"></div>
<!-- quick action buttons -->
<div class="btn" style="left:1657.6px;top:689.3px;width:151.7px;height:26.7px"></div>
<div class="btn" style="left:1822.7px;top:689.3px;width:140px;height:26.7px"></div>
<div class="btn" style="left:1657.6px;top:729.4px;width:300px;height:27.2px"></div>

<div class="t" style="left:888.1px;top:10.5px;font-size:17.48px;color:#e2e2e2;">Adobe Illustrator 2025</div>
<div class="t" style="left:83.5px;top:52.5px;font-size:13.81px;color:#f2f2f2;font-weight:bold;">Mock Up –&gt; FREE.ai @ 14,3 % (RGB/Preview)</div>
<div class="t" style="left:1722.7px;top:12.3px;font-size:15.0px;color:#ffffff;font-weight:bold;">Share</div>
<div class="t" style="left:1656.5px;top:66.7px;font-size:13.75px;color:#f2f2f2;font-weight:bold;">Properties</div>
<div class="t" style="left:1657.7px;top:107.9px;font-size:13.76px;color:#dcdcdc;">No Selection</div>
<div class="t" style="left:1657.3px;top:152.7px;font-size:14.0px;color:#dcdcdc;">Document</div>
<div class="t" style="left:1712.3px;top:188.9px;font-size:14.0px;color:#d0d0d0;">Units:</div>
<div class="t" style="left:1764.2px;top:189.3px;font-size:13.6px;color:#f0f0f0;">Pixels</div>
<div class="t" style="left:1688.4px;top:226.5px;font-size:14.2px;color:#d0d0d0;">Artboard:</div>
<div class="t" style="left:1784.7px;top:264.2px;font-size:14.2px;color:#f0f0f0;">Edit Artboards</div>
<div class="t" style="left:1657.3px;top:321.1px;font-size:13.83px;color:#dcdcdc;">Ruler &amp; Grids</div>
<div class="t" style="left:1657.3px;top:371.4px;font-size:13.5px;color:#dcdcdc;">Guides</div>
<div class="t" style="left:1657.3px;top:420.6px;font-size:13.8px;color:#dcdcdc;">Snap Options</div>
<div class="t" style="left:1657.5px;top:468.3px;font-size:13.45px;color:#dcdcdc;">Preferences</div>
<div class="t" style="left:1657.5px;top:502.3px;font-size:14.0px;color:#dcdcdc;">Keyboard Increment:</div>
<div class="t" style="left:1680.8px;top:538.9px;font-size:13.47px;color:#dcdcdc;">Use Preview Bounds</div>
<div class="t" style="left:1680.8px;top:570.6px;font-size:13.42px;color:#dcdcdc;">Scale Corners</div>
<div class="t" style="left:1680.8px;top:601.8px;font-size:13.54px;color:#dcdcdc;">Scale Strokes &amp; Effects</div>
<div class="t" style="left:1657.6px;top:660.2px;font-size:14.1px;color:#dcdcdc;">Quick Actions</div>
<div class="t" style="left:1681.2px;top:695.9px;font-size:14.0px;color:#f0f0f0;">Document Setup</div>
<div class="t" style="left:1851.5px;top:696.4px;font-size:13.41px;color:#f0f0f0;">Preferences</div>
<div class="t" style="left:1731.5px;top:736.3px;font-size:13.71px;color:#f0f0f0;">Generate Vectors (Beta)</div>
<div class="t" style="left:91.2px;top:1099.1px;font-size:14.5px;color:#dcdcdc;">Select the ‘Question mark’ icon to learn how to use the tool.</div>
<div class="t" style="left:483.9px;top:1130.9px;font-size:14.26px;color:#d0d0d0;">Toggle Direct Selection</div>
<div class="t" style="left:61.7px;top:1129.6px;font-size:14.0px;color:#e6e6e6;">14.3%</div>
<div class="t" style="left:156.7px;top:1129.6px;font-size:14.0px;color:#e6e6e6;">0°</div>
<div class="t" style="left:300.6px;top:1129.6px;font-size:14.0px;color:#e6e6e6;">1</div>
<div class="t" style="left:655.0px;top:1020.7px;font-size:16.25px;color:#f0f0f0;">Draw (Pencil)</div>
<div class="t" style="left:810.2px;top:1020.6px;font-size:16.44px;color:#f0f0f0;">Generate Vectors (Beta)</div>
</body></html>
